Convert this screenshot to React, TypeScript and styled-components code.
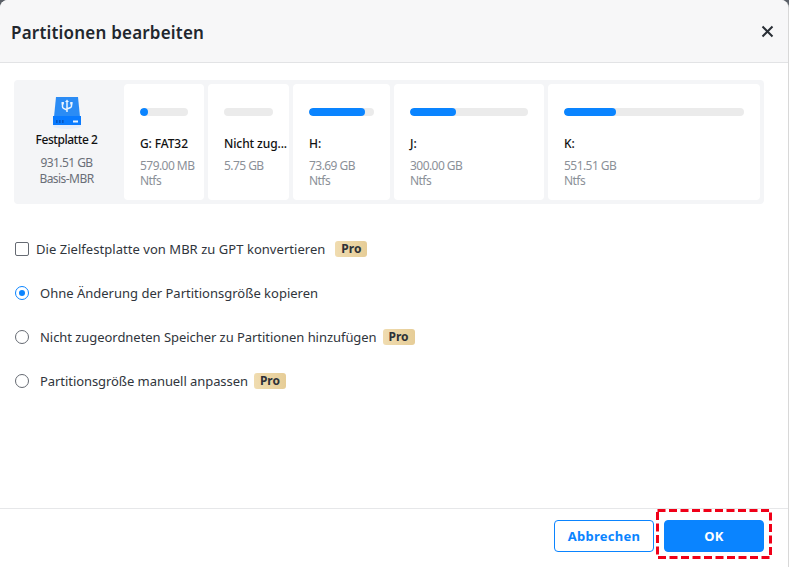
import React from "react";
import styled, { createGlobalStyle } from "styled-components";

const Global = createGlobalStyle`
  html, body { margin: 0; padding: 0; background: #5b6068; }
  body { font-family: "Noto Sans", "Open Sans", Arial, sans-serif; }
`;

const Dialog = styled.div`
  position: relative;
  width: 788px;
  height: 567px;
  background: #fff;
  border-radius: 8px 8px 0 0;
  overflow: hidden;
  display: flex;
  flex-direction: column;
  border-right: 1px solid #d8d8d8;
`;

const Header = styled.header`
  height: 62px;
  flex: none;
  background: #f7f7f8;
  border-bottom: 1px solid #e2e3e5;
  display: flex;
  align-items: center;
  justify-content: space-between;
  padding: 0 13px 0 11px;
`;

const Title = styled.h1`
  margin: 0;
  padding-top: 2px;
  font-size: 17px;
  font-weight: 600;
  color: #22272e;
  letter-spacing: 0.2px;
`;

const CloseButton = styled.button`
  border: 0;
  padding: 0;
  background: none;
  width: 15px;
  height: 15px;
  display: flex;
`;

const Body = styled.main`
  flex: 1;
  padding: 17px 24px 0 14px;
  display: flex;
  flex-direction: column;
`;

const DiskPanel = styled.section`
  height: 124px;
  background: #f4f5f7;
  border-radius: 4px;
  display: flex;
  gap: 4px;
  padding: 4px;
  box-sizing: border-box;
`;

const DiskInfo = styled.div`
  width: 102px;
  box-sizing: border-box;
  flex: none;
  display: flex;
  flex-direction: column;
  align-items: center;
  padding: 12px 5px 0 0;
`;

const DiskName = styled.div`
  margin-top: 2px;
  font-size: 12px;
  font-weight: 500;
  line-height: 16px;
  letter-spacing: -0.45px;
  color: #111;
`;

const DiskMeta = styled.div<{ $top: number }>`
  font-size: 12px;
  line-height: 16px;
  letter-spacing: -0.55px;
  color: #6a6f78;
  margin-top: ${(p) => p.$top}px;
`;

const Card = styled.div<{ $w: number }>`
  width: ${(p) => p.$w}px;
  flex: none;
  box-sizing: border-box;
  background: #fff;
  border-radius: 4px;
  padding: 24px 16px 0;
`;

const Track = styled.div`
  height: 8px;
  border-radius: 4px;
  background: #ebebeb;
  overflow: hidden;
`;

const Fill = styled.div`
  height: 100%;
  border-radius: 4px;
  background: #0a84ff;
`;

const CardLabel = styled.div`
  margin-top: 20px;
  font-size: 12px;
  font-weight: 500;
  line-height: 16px;
  letter-spacing: -0.1px;
  color: #111;
  white-space: nowrap;
`;

const CardMetaList = styled.div`
  margin-top: 6px;
  font-size: 12px;
  line-height: 15px;
  letter-spacing: -0.55px;
  color: #8b9098;
  white-space: nowrap;
`;

const Options = styled.div`
  margin-top: 23px;
  display: flex;
  flex-direction: column;
`;

const Option = styled.label<{ $spacing?: number }>`
  height: 44px;
  display: flex;
  align-items: center;
  margin-left: 1px;
  font-size: 13px;
  letter-spacing: ${(p) => p.$spacing ?? 0}px;
  color: #30353c;
  white-space: nowrap;
`;

const CheckBox = styled.span`
  width: 14px;
  height: 14px;
  box-sizing: border-box;
  border: 1.5px solid #656a72;
  border-radius: 2px;
  margin-right: 7px;
  flex: none;
`;

const Radio = styled.span<{ $on?: boolean }>`
  width: 14px;
  height: 14px;
  box-sizing: border-box;
  border-radius: 50%;
  border: 1.5px solid ${(p) => (p.$on ? "#0a84ff" : "#656a72")};
  margin-right: 11px;
  flex: none;
  display: flex;
  align-items: center;
  justify-content: center;
  &::after {
    content: "";
    width: 6px;
    height: 6px;
    border-radius: 50%;
    background: ${(p) => (p.$on ? "#0a84ff" : "transparent")};
  }
`;

const ProBadge = styled.span<{ $gap: number }>`
  margin-left: ${(p) => p.$gap}px;
  width: 32px;
  height: 16px;
  border-radius: 3px;
  background: linear-gradient(90deg, #f0dcb0, #e6cd97);
  color: #2d3138;
  font-size: 12px;
  font-weight: 700;
  letter-spacing: 0;
  line-height: 16px;
  text-align: center;
`;

const Footer = styled.footer`
  height: 59px;
  flex: none;
  box-sizing: border-box;
  border-top: 1px solid #e6e7e9;
  display: flex;
  justify-content: flex-end;
  gap: 10px;
  padding: 11px 24px 0 0;
`;

const Button = styled.button<{ $primary?: boolean }>`
  width: 100px;
  height: 32px;
  box-sizing: border-box;
  border-radius: 4px;
  border: 1px solid #0a84ff;
  background: ${(p) => (p.$primary ? "#0a84ff" : "#fff")};
  color: ${(p) => (p.$primary ? "#fff" : "#0a84ff")};
  font-family: inherit;
  font-size: 13px;
  font-weight: 700;
  letter-spacing: 0.25px;
  padding: 0;
`;

const Highlight = styled.svg`
  position: absolute;
  left: 656px;
  top: 509px;
  pointer-events: none;
`;

const UsbDrive = () => (
  <svg width="30" height="34" viewBox="0 0 30 34" fill="none">
    <ellipse cx="15" cy="30" rx="14" ry="3" fill="#e3ecfb" />
    <path d="M4 1 h22 l2 20 H2 Z" fill="#2b8cf5" />
    <rect x="1" y="20" width="28" height="9" fill="#0a7bff" />
    <path
      d="M15 5 v11 M10.5 8 v2.8 q0 1 1 1.5 L15 14 M19.5 8 v2 q0 1 -1 1.5 L15 13"
      stroke="#eaf4ff"
      strokeWidth="1.5"
    />
    <path d="M13 6 L15 3.5 L17 6 Z" fill="#eaf4ff" />
    <rect x="9.5" y="6" width="2.4" height="2.4" fill="#eaf4ff" />
    <rect x="18.2" y="6" width="2.4" height="2.4" fill="#eaf4ff" />
    <rect x="4" y="24" width="1.6" height="3" fill="#003f9e" opacity="0.6" />
    <rect x="7" y="24" width="1.6" height="3" fill="#003f9e" opacity="0.6" />
    <rect x="10" y="24" width="1.6" height="3" fill="#003f9e" opacity="0.6" />
    <rect x="21" y="24.5" width="5" height="2" fill="#e6f2ff" />
  </svg>
);

const cards = [
  { w: 80, fill: 8, label: "G: FAT32", meta: ["579.00 MB", "Ntfs"] },
  { w: 81, fill: 0, label: "Nicht zug...", meta: ["5.75 GB"] },
  { w: 97, fill: 56, label: "H:", meta: ["73.69 GB", "Ntfs"] },
  { w: 150, fill: 46, label: "J:", meta: ["300.00 GB", "Ntfs"] },
  { w: 212, fill: 52, label: "K:", meta: ["551.51 GB", "Ntfs"] },
];

export default function App() {
  return (
    <>
      <Global />
      <Dialog>
        <Header>
          <Title>Partitionen bearbeiten</Title>
          <CloseButton aria-label="Schließen">
            <svg width="15" height="15" viewBox="0 0 15 15">
              <path d="M2.5 2.5 L12.5 12.5 M12.5 2.5 L2.5 12.5" stroke="#2a2f36" strokeWidth="2" />
            </svg>
          </CloseButton>
        </Header>
        <Body>
          <DiskPanel>
            <DiskInfo>
              <UsbDrive />
              <DiskName>Festplatte 2</DiskName>
              <DiskMeta $top={7}>931.51 GB</DiskMeta>
              <DiskMeta $top={0}>Basis-MBR</DiskMeta>
            </DiskInfo>
            {cards.map((c) => (
              <Card key={c.label} $w={c.w}>
                <Track>
                  <Fill style={{ width: c.fill }} />
                </Track>
                <CardLabel>{c.label}</CardLabel>
                <CardMetaList>
                  {c.meta.map((m) => (
                    <div key={m}>{m}</div>
                  ))}
                </CardMetaList>
              </Card>
            ))}
          </DiskPanel>
          <Options>
            <Option $spacing={0.04}>
              <CheckBox />
              Die Zielfestplatte von MBR zu GPT konvertieren
              <ProBadge $gap={10}>Pro</ProBadge>
            </Option>
            <Option>
              <Radio $on />
              Ohne Änderung der Partitionsgröße kopieren
            </Option>
            <Option $spacing={-0.05}>
              <Radio />
              Nicht zugeordneten Speicher zu Partitionen hinzufügen
              <ProBadge $gap={6}>Pro</ProBadge>
            </Option>
            <Option $spacing={-0.065}>
              <Radio />
              Partitionsgröße manuell anpassen
              <ProBadge $gap={6}>Pro</ProBadge>
            </Option>
          </Options>
        </Body>
        <Footer>
          <Button>Abbrechen</Button>
          <Button $primary>OK</Button>
        </Footer>
        <Highlight width="116" height="50" viewBox="0 0 116 50" fill="none">
          <rect x="1.5" y="1.5" width="113" height="47" stroke="#f00018" strokeWidth="3" strokeDasharray="8 3.5" />
        </Highlight>
      </Dialog>
    </>
  );
}
